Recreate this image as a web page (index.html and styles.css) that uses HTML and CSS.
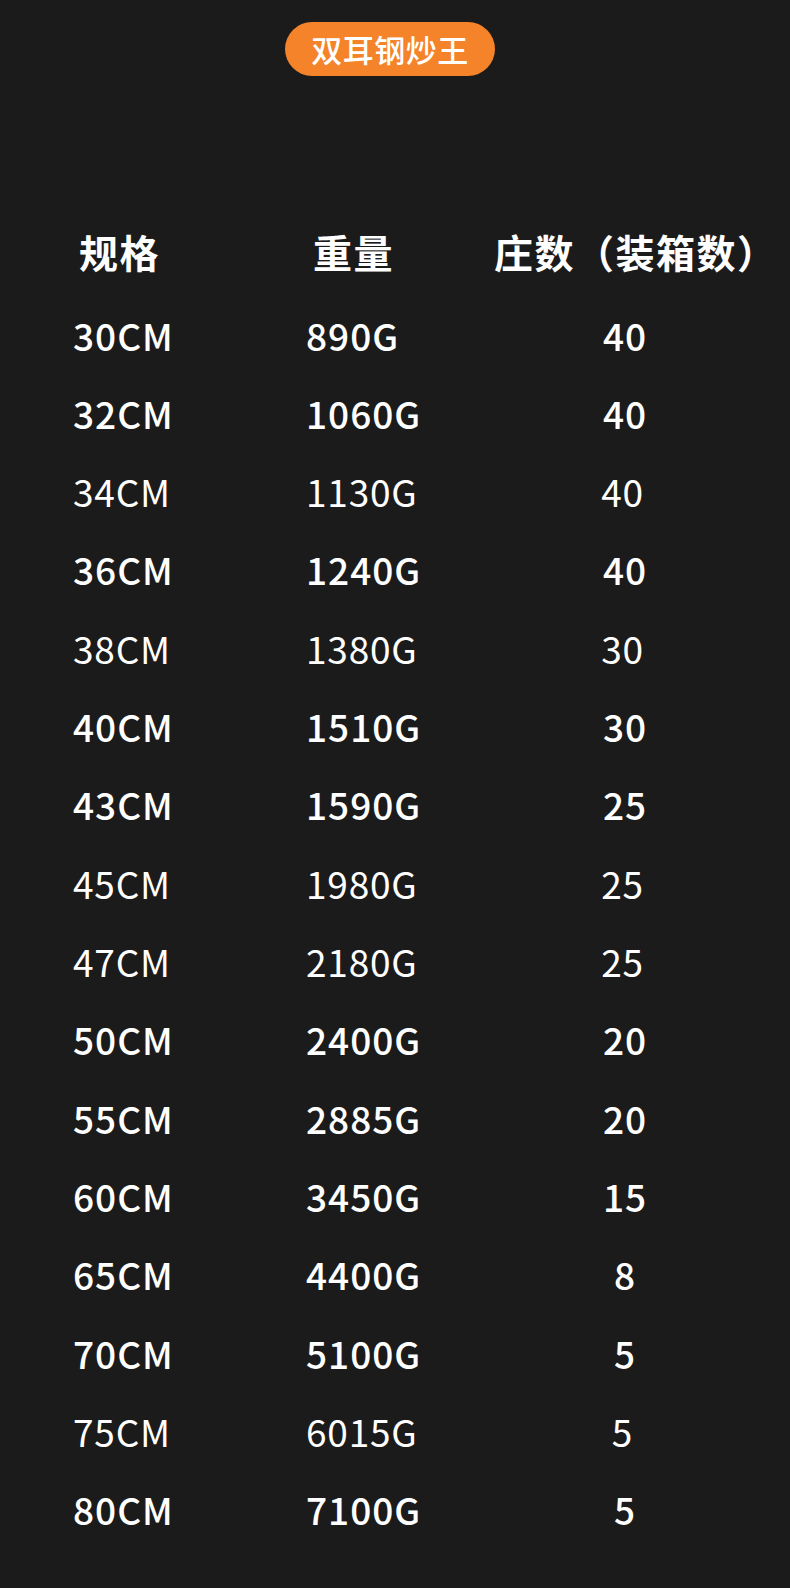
FILE: index.html
```html
<!DOCTYPE html>
<html lang="zh-CN">
<head>
<meta charset="utf-8">
<title>双耳钢炒王</title>
<link rel="stylesheet" href="styles.css">
</head>
<body>
<div class="page">
  <div class="badge-wrap"><div class="badge">双耳钢炒王</div></div>
  <div class="table">
    <div class="row head"><div class="c1">规格</div><div class="c2">重量</div><div class="c3">庄数（装箱数）</div></div>
    <div class="row b"><div class="c1">30CM</div><div class="c2">890G</div><div class="c3">40</div></div>
    <div class="row b"><div class="c1">32CM</div><div class="c2">1060G</div><div class="c3">40</div></div>
    <div class="row l"><div class="c1">34CM</div><div class="c2">1130G</div><div class="c3">40</div></div>
    <div class="row b"><div class="c1">36CM</div><div class="c2">1240G</div><div class="c3">40</div></div>
    <div class="row l"><div class="c1">38CM</div><div class="c2">1380G</div><div class="c3">30</div></div>
    <div class="row b"><div class="c1">40CM</div><div class="c2">1510G</div><div class="c3">30</div></div>
    <div class="row b"><div class="c1">43CM</div><div class="c2">1590G</div><div class="c3">25</div></div>
    <div class="row l"><div class="c1">45CM</div><div class="c2">1980G</div><div class="c3">25</div></div>
    <div class="row l"><div class="c1">47CM</div><div class="c2">2180G</div><div class="c3">25</div></div>
    <div class="row b"><div class="c1">50CM</div><div class="c2">2400G</div><div class="c3">20</div></div>
    <div class="row b"><div class="c1">55CM</div><div class="c2">2885G</div><div class="c3">20</div></div>
    <div class="row b"><div class="c1">60CM</div><div class="c2">3450G</div><div class="c3">15</div></div>
    <div class="row b"><div class="c1">65CM</div><div class="c2">4400G</div><div class="c3">8</div></div>
    <div class="row b"><div class="c1">70CM</div><div class="c2">5100G</div><div class="c3">5</div></div>
    <div class="row l"><div class="c1">75CM</div><div class="c2">6015G</div><div class="c3">5</div></div>
    <div class="row b"><div class="c1">80CM</div><div class="c2">7100G</div><div class="c3">5</div></div>
  </div>
</div>
</body>
</html>
```
FILE: styles.css
```css
html, body {
  margin: 0;
  padding: 0;
  background: #1b1b1b;
}
.page {
  width: 790px;
  height: 1588px;
  background: #1b1b1b;
  color: #ffffff;
  font-family: "Noto Sans CJK SC", "Noto Sans", sans-serif;
  padding-top: 22px;
  box-sizing: border-box;
}
.badge-wrap {
  display: flex;
  justify-content: center;
  padding-right: 10px;
}
.badge {
  width: 210px;
  height: 54px;
  border-radius: 27px;
  background: #f5832a;
  color: #ffffff;
  font-size: 31px;
  font-weight: 500;
  line-height: 54px;
  text-align: center;
  letter-spacing: 0.5px;
}
.table {
  margin-top: 133px;
  padding-left: 73px;
}
.row {
  display: grid;
  grid-template-columns: 233px 185px 268px;
  height: 78.33px;
  line-height: 78.33px;
  font-size: 37px;
  white-space: nowrap;
}
.row.head {
  height: 86.5px;
  line-height: 84px;
  font-size: 39px;
  font-weight: 700;
  letter-spacing: 1.5px;
}
.row.head .c1 {
  padding-left: 6px;
}
.row.head .c2 {
  padding-left: 7px;
}
.row.head .c3 {
  text-align: left;
  padding-left: 3px;
}
.c3 {
  text-align: center;
}
.row.b {
  font-weight: 500;
  letter-spacing: 1px;
}
.row.l {
  font-weight: 400;
  letter-spacing: 0.8px;
}
.row.l .c3 {
  padding-right: 5px;
}
```
